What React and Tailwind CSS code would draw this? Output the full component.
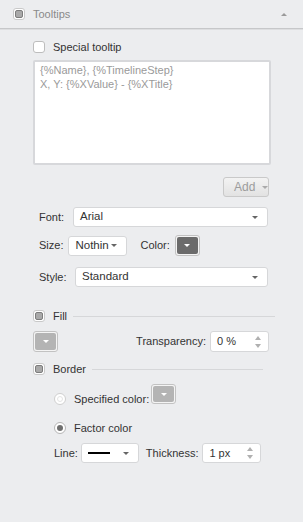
const font = "font-['Liberation_Sans',Arial,sans-serif]";

function DownArrow({ color = "border-t-[#666]" }) {
  return <div className={`w-0 h-0 shrink-0 border-x-[3px] border-x-transparent border-t-[3px] ${color}`} />;
}

function GrayCheck() {
  return (
    <div className="w-[12px] h-[12px] rounded-[3px] border border-[#c9c9c9] bg-white p-px shrink-0">
      <div className="w-full h-full rounded-[2px] border border-[#7d7d7d] bg-[#a9a9a9]" />
    </div>
  );
}

function ColorButton({ dark, className = "" }) {
  return (
    <div className={`w-[25px] rounded-[3px] border border-[#c2c2c2] bg-[#f4f4f4] p-px shrink-0 ${className}`}>
      <div
        className={`w-full h-full rounded-[2px] flex items-center justify-center ${
          dark ? "bg-[#6b6b6b]" : "bg-[#b4b4b4]"
        }`}
      >
        <div className="w-0 h-0 border-x-[3px] border-x-transparent border-t-[3px] border-t-white" />
      </div>
    </div>
  );
}

function Select({ value, className = "" }) {
  return (
    <div
      className={`h-[20px] bg-white border border-[#d6d7d9] rounded-[3px] flex items-center pl-[6px] pr-[9px] ${className}`}
    >
      <span className="text-[11.5px] text-[#333] flex-1 min-w-0 whitespace-nowrap">{value}</span>
      <div className="ml-[4px]">
        <DownArrow />
      </div>
    </div>
  );
}

function Spinner({ value, className = "" }) {
  return (
    <div
      className={`bg-white border border-[#d6d7d9] rounded-[3px] flex items-center pl-[6px] pr-[7px] ${className}`}
    >
      <span className="text-[11px] text-[#333] flex-1">{value}</span>
      <div className="flex flex-col gap-[4px]">
        <div className="w-0 h-0 border-x-[3px] border-x-transparent border-b-[4px] border-b-[#b0b0b0]" />
        <div className="w-0 h-0 border-x-[3px] border-x-transparent border-t-[4px] border-t-[#b0b0b0]" />
      </div>
    </div>
  );
}

export default function App() {
  return (
    <div className={`w-[303px] h-[522px] bg-[#ecedef] text-[11px] text-[#333] ${font}`}>
      {/* header */}
      <div className="h-[29px] flex items-center pl-[13px] pr-[16px] border-b border-[#c6c7c9] shadow-[0_1px_0_#dddee0]">
        <GrayCheck />
        <span className="ml-[8px] text-[11px] text-[#8a8a8a]">Tooltips</span>
        <div className="ml-auto w-0 h-0 border-x-[3px] border-x-transparent border-b-[3px] border-b-[#9a9a9a]" />
      </div>

      <div className="pl-[33px] pr-[32px] pt-[12px] flex flex-col">
        <div className="flex items-center h-[12px]">
          <div className="w-[12px] h-[12px] rounded-[3px] border border-[#bdbdbd] bg-white" />
          <span className="ml-[8px]">Special tooltip</span>
        </div>

        <div className="mt-[7px] h-[105px] bg-white border-2 border-[#d7d8db] rounded-[2px] px-[5px] pt-[1px] text-[#9a9a9a] leading-[14px]">
          <div>{"{%Name}, {%TimelineStep}"}</div>
          <div>{"X, Y: {%XValue} - {%XTitle}"}</div>
        </div>

        <div className="mt-[12px] self-end mr-[2px] w-[46px] h-[20px] rounded-[3px] border border-[#c9c9c9] bg-gradient-to-b from-[#f3f3f3] to-[#e2e2e2] flex items-center pl-[10px] gap-[7px]">
          <span className="text-[12px] text-[#9c9c9c]">Add</span>
          <DownArrow color="border-t-[#aaa]" />
        </div>

        <div className="mt-[10px] h-[20px] flex items-center pl-[6px]">
          <span>Font:</span>
          <Select value="Arial" className="ml-auto mr-[3px] w-[195px]" />
        </div>

        <div className="mt-[8px] h-[21px] flex items-center pl-[6px]">
          <span>Size:</span>
          <Select value="Nothin" className="ml-[5px] w-[59px]" />
          <span className="ml-[13px]">Color:</span>
          <ColorButton dark className="ml-[5px] h-[21px]" />
        </div>

        <div className="mt-[11px] h-[20px] flex items-center pl-[6px]">
          <span>Style:</span>
          <Select value="Standard" className="ml-auto mr-[3px] w-[193px]" />
        </div>

        <div className="mt-[23px] h-[12px] flex items-center">
          <GrayCheck />
          <span className="ml-[8px]">Fill</span>
          <div className="ml-[6px] -mr-[4px] flex-1 h-px bg-[#d6d7d9]" />
        </div>

        <div className="mt-[9px] h-[21px] flex items-center">
          <ColorButton className="h-[21px]" />
          <span className="ml-auto">Transparency:</span>
          <Spinner value="0 %" className="ml-[4px] mr-[2px] w-[59px] h-[21px]" />
        </div>

        <div className="mt-[11px] h-[12px] flex items-center">
          <GrayCheck />
          <span className="ml-[8px]">Border</span>
          <div className="ml-[6px] mr-[8px] flex-1 h-px bg-[#d6d7d9]" />
        </div>

        <div className="mt-[9px] pl-[21px] flex items-end">
          <div className="w-[12px] h-[12px] rounded-full border border-[#cfcfcf] bg-white p-[2px] mb-[-1px]">
            <div className="w-full h-full rounded-full border border-[#e4e4e4]" />
          </div>
          <span className="ml-[8px] leading-[12px] mb-[-1px]">Specified color:</span>
          <ColorButton className="ml-[2px] h-[20px]" />
        </div>

        <div className="mt-[18px] pl-[21px] h-[12px] flex items-center">
          <div className="w-[12px] h-[12px] rounded-full border border-[#b5b5b5] bg-white flex items-center justify-center">
            <div className="w-[6px] h-[6px] rounded-full bg-[#6f6f6f]" />
          </div>
          <span className="ml-[8px]">Factor color</span>
        </div>

        <div className="mt-[9px] pl-[21px] h-[20px] flex items-center">
          <span>Line:</span>
          <div className="ml-[3px] w-[58px] h-[20px] bg-white border border-[#d6d7d9] rounded-[3px] flex items-center pl-[6px] pr-[9px]">
            <div className="w-[22px] h-[2px] bg-black" />
            <div className="ml-auto">
              <DownArrow />
            </div>
          </div>
          <span className="ml-[7px]">Thickness:</span>
          <Spinner value="1 px" className="ml-[4px] w-[59px] h-[20px]" />
        </div>
      </div>
    </div>
  );
}
